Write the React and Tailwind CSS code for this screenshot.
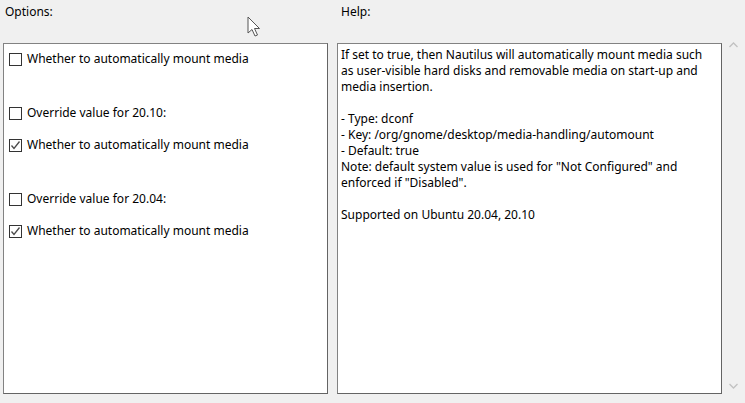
import React from "react";

function Box({ checked }) {
  return (
    <span className="relative inline-block w-[13px] h-[13px] border border-[#333333] bg-white shrink-0">
      {checked && (
        <svg className="absolute left-0 top-0" width="11" height="11" viewBox="0 0 11 11">
          <path d="M1.5 5.5 L4 8.5 L9.5 1.5" fill="none" stroke="#4a4a4a" strokeWidth="1.3" />
        </svg>
      )}
    </span>
  );
}

function Row({ checked, children, className = "" }) {
  return (
    <div className={"flex items-center gap-[5px] h-[16px] " + className}>
      <Box checked={checked} />
      <span className="leading-[16px]">{children}</span>
    </div>
  );
}

export default function App() {
  return (
    <div
      className="relative w-[745px] h-[403px] bg-[#f0f0f0] text-[12px] text-black overflow-hidden"
      style={{ fontFamily: '"Segoe UI", "Noto Sans", sans-serif' }}
    >
      <div className="flex pl-[3px] h-full">
        <div className="flex flex-col w-[325px]">
          <div className="h-[43px] pl-[2px] pt-[4px] leading-[16px]">Options:</div>
          <div className="h-[351px] bg-white border border-[#828282] border-b-[#646464] border-r-[#646464] pl-[5px] pt-[7px]">
            <Row checked={false}>Whether to automatically mount media</Row>
            <Row checked={false} className="mt-[38px]">Override value for 20.10:</Row>
            <Row checked={true} className="mt-[16px]">Whether to automatically mount media</Row>
            <Row checked={false} className="mt-[38px]">Override value for 20.04:</Row>
            <Row checked={true} className="mt-[16px]">Whether to automatically mount media</Row>
          </div>
        </div>
        <div className="flex flex-col w-[385px] ml-[9px]">
          <div className="h-[43px] pl-[4px] pt-[4px] leading-[16px]">Help:</div>
          <div className="h-[351px] bg-white border border-[#828282] border-b-[#646464] border-r-[#646464] pl-[3px] pr-[8px] pt-[3px] leading-[16px] whitespace-pre-line">
            {`If set to true, then Nautilus will automatically mount media such as user-visible hard disks and removable media on start-up and media insertion.

- Type: dconf
- Key: /org/gnome/desktop/media-handling/automount
- Default: true
Note: default system value is used for "Not Configured" and enforced if "Disabled".

Supported on Ubuntu 20.04, 20.10`}
          </div>
        </div>
        <div className="flex flex-col justify-between w-[23px] pt-[42px] pb-[14px] items-center">
          <svg width="9" height="6" viewBox="0 0 9 6">
            <path d="M0.5 5 L4.5 1 L8.5 5" fill="none" stroke="#c2c2c2" strokeWidth="1.3" />
          </svg>
          <svg width="9" height="6" viewBox="0 0 9 6">
            <path d="M0.5 1 L4.5 5 L8.5 1" fill="none" stroke="#c2c2c2" strokeWidth="1.3" />
          </svg>
        </div>
      </div>
      <svg className="absolute left-[247px] top-[16px]" width="16" height="22" viewBox="0 0 16 22">
        <path d="M1 1 L1 17 L5 13.5 L8 20 L10.5 19 L7.5 12.5 L12.5 12.5 Z" fill="white" stroke="#555" strokeWidth="1" strokeLinejoin="round" />
      </svg>
    </div>
  );
}
